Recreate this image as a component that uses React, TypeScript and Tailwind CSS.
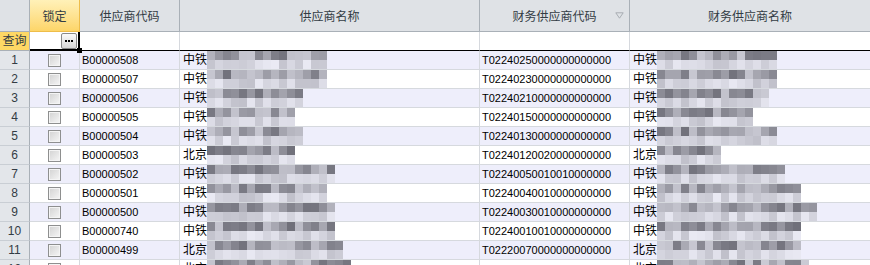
import React from 'react';

type Row = { no: number; code: string; name: string; fcode: string; nameW: number; fnameW: number };

const rows: Row[] = [
  { no: 1, code: 'B00000508', name: '中铁', fcode: 'T02240250000000000000', nameW: 124, fnameW: 120 },
  { no: 2, code: 'B00000507', name: '中铁', fcode: 'T02240230000000000000', nameW: 124, fnameW: 120 },
  { no: 3, code: 'B00000506', name: '中铁', fcode: 'T02240210000000000000', nameW: 96, fnameW: 112 },
  { no: 4, code: 'B00000505', name: '中铁', fcode: 'T02240150000000000000', nameW: 88, fnameW: 96 },
  { no: 5, code: 'B00000504', name: '中铁', fcode: 'T02240130000000000000', nameW: 96, fnameW: 120 },
  { no: 6, code: 'B00000503', name: '北京', fcode: 'T02240120020000000000', nameW: 88, fnameW: 64 },
  { no: 7, code: 'B00000502', name: '中铁', fcode: 'T02240050010010000000', nameW: 128, fnameW: 128 },
  { no: 8, code: 'B00000501', name: '中铁', fcode: 'T02240040010000000000', nameW: 120, fnameW: 144 },
  { no: 9, code: 'B00000500', name: '中铁', fcode: 'T02240030010000000000', nameW: 128, fnameW: 160 },
  { no: 10, code: 'B00000740', name: '中铁', fcode: 'T02240010010000000000', nameW: 128, fnameW: 144 },
  { no: 11, code: 'B00000499', name: '北京', fcode: 'T02220070000000000000', nameW: 136, fnameW: 144 },
  { no: 12, code: '', name: '北京', fcode: '', nameW: 144, fnameW: 152 },
];

const font = { fontFamily: '"Liberation Sans", "Noto Sans CJK SC", sans-serif' };

function rnd(seed: number, i: number, j: number) {
  const v = Math.sin(seed * 12.9898 + i * 78.233 + j * 37.719) * 43758.5453;
  return v - Math.floor(v);
}

function grey(v: number) {
  const g = Math.round(v);
  return `rgb(${g}, ${g}, ${Math.min(255, g + 10)})`;
}

// pixelated blur over the supplier names
function Mosaic({ seed, width }: { seed: number; width: number }) {
  const n = Math.floor(width / 8);
  return (
    <div className="flex h-[18px]">
      {Array.from({ length: n }).map((_, i) => (
        <div key={i} className="flex flex-col w-[8px]">
          <div className="h-[9px]" style={{ background: grey(112 + rnd(seed, i, 1) * 90) }} />
          <div className="h-[9px]" style={{ background: grey(192 + rnd(seed, i, 2) * 42) }} />
        </div>
      ))}
    </div>
  );
}

function Checkbox() {
  return (
    <div className="w-[13px] h-[13px] border border-[#8e8f8f] bg-gradient-to-br from-[#d2d2d2] to-[#f6f6f6] shadow-[inset_0_0_0_1px_#f4f4f4]" />
  );
}

export default function App() {
  return (
    <div className="w-[870px] h-[265px] overflow-hidden bg-white text-[11px] text-black" style={font}>
      <div className="grid grid-cols-[30px_50px_100px_300px_150px_240px]">
        {/* header */}
        <div className="h-[32px] bg-[#dfe2e6] border-r border-b border-[#a9b0b7]" />
        <div className="h-[32px] bg-gradient-to-b from-[#fff1b8] to-[#fdd568] border-r border-b border-[#eebd4a] flex items-center justify-center text-[12px] text-[#333c44] pt-[2px]">锁定</div>
        <div className="h-[32px] bg-[#dfe2e6] border-r border-b border-[#a9b0b7] flex items-center justify-center text-[12px] text-[#333c44] pt-[2px]">供应商代码</div>
        <div className="h-[32px] bg-[#dfe2e6] border-r border-b border-[#a9b0b7] flex items-center justify-center text-[12px] text-[#333c44] pt-[2px]">供应商名称</div>
        <div className="h-[32px] bg-[#dfe2e6] border-r border-b border-[#a9b0b7] flex items-center justify-center text-[12px] text-[#333c44] pt-[2px] relative">
          财务供应商代码
          <svg className="absolute right-[5px] top-[12px]" width="9" height="7" viewBox="0 0 9 7">
            <path d="M0.8 0.8 L8.2 0.8 L4.5 6.2 Z" fill="none" stroke="#a8adb3" strokeWidth="1" />
          </svg>
        </div>
        <div className="h-[32px] bg-[#dfe2e6] border-b border-[#a9b0b7] flex items-center justify-center text-[12px] text-[#333c44] pt-[2px]">财务供应商名称</div>

        {/* filter row */}
        <div className="h-[19px] bg-[#fed865] border-r border-b border-[#a9b0b7] flex items-center justify-center text-[12px] text-[#333c44]">查询</div>
        <div className="h-[19px] border-r-2 border-b-2 border-black relative flex items-center justify-end pr-[1px]">
          <div className="w-[16px] h-[16px] rounded-[2px] border border-[#8a8a8a] bg-gradient-to-b from-[#fbfbfb] to-[#d8d8d8] flex items-center justify-center gap-[1px]">
            <div className="w-[2px] h-[2px] bg-black" />
            <div className="w-[2px] h-[2px] bg-black" />
            <div className="w-[2px] h-[2px] bg-black" />
          </div>
          <div className="absolute right-[-4px] bottom-[-4px] w-[5px] h-[5px] bg-black" />
        </div>
        <div className="h-[19px] border-r border-b border-r-[#d6d9de] border-b-black" />
        <div className="h-[19px] border-r border-b border-r-[#d6d9de] border-b-black" />
        <div className="h-[19px] border-r border-b border-r-[#d6d9de] border-b-black" />
        <div className="h-[19px] border-b border-b-black" />

        {/* data rows */}
        {rows.map((r) => {
          const bg = r.no % 2 === 1 ? 'bg-[#eeeefb]' : 'bg-white';
          return (
            <React.Fragment key={r.no}>
              <div className="h-[19px] bg-[#e3e6ea] border-r border-b border-[#a9b0b7] border-b-[#c9ced4] flex items-center justify-center text-[12px] text-[#333c44]">{r.no}</div>
              <div className={`h-[19px] ${bg} border-r border-b border-[#d6d9de] flex items-center justify-center`}>
                <Checkbox />
              </div>
              <div className={`h-[19px] ${bg} border-r border-b border-[#d6d9de] flex items-center pl-[2px]`}>{r.code}</div>
              <div className={`h-[19px] ${bg} border-r border-b border-[#d6d9de] flex items-center pl-[3px] text-[12px]`}>
                <span className="w-[24px] shrink-0">{r.name}</span>
                <Mosaic seed={r.no} width={r.nameW} />
              </div>
              <div className={`h-[19px] ${bg} border-r border-b border-[#d6d9de] flex items-center pl-[2px]`}>{r.fcode}</div>
              <div className={`h-[19px] ${bg} border-b border-[#d6d9de] flex items-center pl-[3px] text-[12px]`}>
                <span className="w-[24px] shrink-0">{r.name}</span>
                <Mosaic seed={r.no + 40} width={r.fnameW} />
              </div>
            </React.Fragment>
          );
        })}
      </div>
    </div>
  );
}
